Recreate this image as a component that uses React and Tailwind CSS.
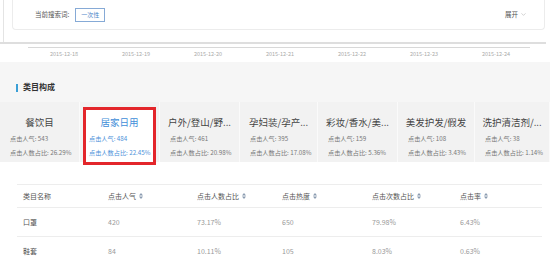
import { ChevronDown } from 'lucide-react';

const DATES = ['2015-12-18', '2015-12-19', '2015-12-20', '2015-12-21', '2015-12-22', '2015-12-23', '2015-12-24'];

const CATS = [
  { name: '餐饮目', pv: 543, pct: '26.29%', w: 'w-[80px]' },
  { name: '居家日用', pv: 484, pct: '22.45%', w: 'w-[80px]', active: true },
  { name: '户外/登山/野...', pv: 461, pct: '20.98%', w: 'w-[80px]' },
  { name: '孕妇装/孕产...', pv: 395, pct: '17.08%', w: 'w-[78px]' },
  { name: '彩妆/香水/美...', pv: 159, pct: '5.36%', w: 'w-[80px]' },
  { name: '美发护发/假发', pv: 108, pct: '3.43%', w: 'w-[77px]' },
  { name: '洗护清洁剂/...', pv: 38, pct: '1.14%', w: 'w-[75px]' },
];

const COLS = ['类目名称', '点击人气', '点击人数占比', '点击热度', '点击次数占比', '点击率'];

const ROWS = [
  ['口罩', '420', '73.17%', '650', '79.98%', '6.43%'],
  ['鞋套', '84', '10.11%', '105', '8.03%', '0.63%'],
];

const SortIcon = () => (
  <svg width="4" height="6" viewBox="0 0 4 6" className="ml-[3px]">
    <path d="M2 0 L4 2.4 L0 2.4 Z" fill="#8a9bb0" />
    <path d="M2 6 L4 3.6 L0 3.6 Z" fill="#8a9bb0" />
  </svg>
);

const CardBody = ({ cat, pad }) => (
  <>
    <div className={`h-[12px] leading-[12px] text-[9.5px] text-center whitespace-nowrap ${cat.active ? 'text-[#3f8ed8]' : 'text-[#444]'}`}>
      {cat.name}
    </div>
    <div className={`${pad} mt-[6px] h-[10px] leading-[10px] text-[6.2px] whitespace-nowrap ${cat.active ? 'text-[#4a90d9]' : 'text-[#777]'}`}>
      点击人气: {cat.pv}
    </div>
    <div className={`${pad} mt-[4px] h-[10px] leading-[10px] text-[6.2px] whitespace-nowrap ${cat.active ? 'text-[#4a90d9]' : 'text-[#777]'}`}>
      点击人数占比: {cat.pct}
    </div>
  </>
);

export default function App() {
  return (
    <div className="w-[550px] h-[265px] overflow-hidden bg-white font-['Noto_Sans_CJK_SC',sans-serif]">
      <div className="h-[42px] ml-[3px] pl-[8px] pr-[5px] border-l border-[#e4e4e4]">
        <div className="h-[30px] border border-t-0 border-[#ececec] rounded-b-[4px] flex items-center pl-[22px] pr-[17px]">
          <span className="text-[6.5px] text-[#555]">当前搜索词:</span>
          <span className="ml-[6px] h-[14px] px-[5px] flex items-center border border-[#86aad6] text-[6px] text-[#4a86c8]">一次性</span>
          <span className="ml-auto flex items-center text-[6.5px] text-[#555]">
            展开
            <ChevronDown className="w-[7px] h-[7px] ml-[2px] text-[#999]" strokeWidth={1.5} />
          </span>
        </div>
      </div>
      <div className="w-[546px] h-[2px] bg-[#dedede]" />
      <div className="ml-[28px] mt-[3px] w-[502px] h-px bg-[#d8d8d8]" />
      <div className="ml-[28px] mt-[2px] flex">
        {DATES.map((d) => (
          <div key={d} className="w-[72px] h-[8px] leading-[8px] text-center text-[5.5px] text-[#aaa]">{d}</div>
        ))}
      </div>
      <div className="mt-[4px] h-[40px] bg-[#f6f6f6] flex items-end pb-[10px] pl-[16px]">
        <div className="w-[2px] h-[8px] bg-[#3a9fd6]" />
        <span className="ml-[5px] text-[8px] leading-[10px] font-bold text-[#333]">类目构成</span>
      </div>
      <div className="h-[60px] flex bg-[#f2f2f2]">
        {CATS.map((cat) =>
          cat.active ? (
            <div key={cat.name} className={`${cat.w} h-full px-[3px] pt-[5px] border-r border-[#fafafa]`}>
              <div className="h-[58px] border-[3px] border-[#e3262b] bg-white pt-[6px]">
                <CardBody cat={cat} pad="pl-[3px]" />
              </div>
            </div>
          ) : (
            <div key={cat.name} className={`${cat.w} h-full pt-[14px] border-r border-[#fafafa]`}>
              <CardBody cat={cat} pad="pl-[10px]" />
            </div>
          )
        )}
      </div>
      <div className="ml-[17px] mt-[22px] w-[525px] border-t border-[#ededed]">
        <div className="grid grid-cols-[85px_89px_85px_90px_88px_1fr] h-[23px] items-center border-b border-[#ededed]">
          {COLS.map((c, i) => (
            <div key={c} className="pl-[6px] flex items-center text-[7px] text-[#555]">
              {c}
              {i > 0 && <SortIcon />}
            </div>
          ))}
        </div>
        {ROWS.map((r) => (
          <div key={r[0]} className="grid grid-cols-[85px_89px_85px_90px_88px_1fr] h-[29px] items-center border-b border-[#ededed]">
            {r.map((v, i) => (
              <div key={i} className={`pl-[6px] text-[7px] ${i === 0 ? 'text-[#555]' : 'text-[#999]'}`}>{v}</div>
            ))}
          </div>
        ))}
      </div>
    </div>
  );
}
